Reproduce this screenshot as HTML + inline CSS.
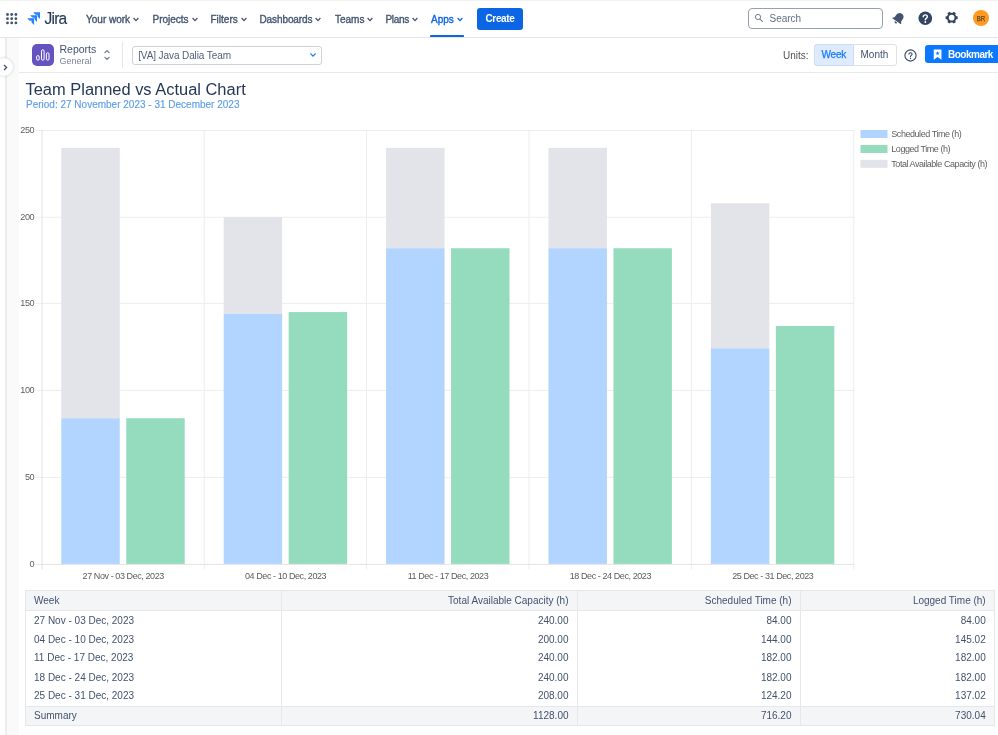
<!DOCTYPE html>
<html>
<head>
<meta charset="utf-8">
<title>Team Planned vs Actual Chart</title>
<style>
*{box-sizing:border-box;margin:0;padding:0}
html,body{width:998px;height:735px;overflow:hidden;background:#fff}
body{font-family:"Liberation Sans",sans-serif;color:#172b4d;position:relative}
.abs{position:absolute}
.t{position:absolute;white-space:nowrap;line-height:1}
/* top nav */
#nav{position:absolute;left:0;top:0;width:998px;height:38px;background:#fff;border-bottom:1px solid #e4e6ea;border-top:1px solid #f1f1f1}
.navi{position:absolute;top:14.5px;font-size:10px;color:#44546f;-webkit-text-stroke:0.35px #44546f;white-space:nowrap;line-height:10px}
.chev{position:absolute;top:16.5px;width:6px;height:5px}
/* second bar */
#bar2{position:absolute;left:19px;top:38px;width:979px;height:35px;background:#fff;border-bottom:1px solid #e6e8eb}
#side{position:absolute;left:5px;top:38px;width:14px;height:697px;background:#fafafa;border-left:2px solid #ebecf0}
/* table */
.hb{background:#f4f5f7;border-top:1px solid #e5e7eb;border-bottom:1px solid #e5e7eb}
.vl{top:590px;width:1px;height:136px;background:#e6e8ec}
.tr{position:absolute;left:0;width:998px;height:10px;font-size:10px;line-height:10px;color:#42526e}
.tr span{position:absolute;top:0;white-space:nowrap}
</style>
</head>
<body><div id="wrap" style="position:absolute;left:0;top:0;width:998px;height:735px;will-change:transform">
<div id="nav"></div>
<div id="side"></div>
<div id="bar2"></div>

<!-- app switcher -->
<svg class="abs" style="left:6.2px;top:12.6px;overflow:visible" width="12" height="12" viewBox="0 0 12 12" fill="#44546f"><circle cx="1.5" cy="1.5" r="1.4"/><circle cx="5.7" cy="1.5" r="1.4"/><circle cx="9.9" cy="1.5" r="1.4"/><circle cx="1.5" cy="5.7" r="1.4"/><circle cx="5.7" cy="5.7" r="1.4"/><circle cx="9.9" cy="5.7" r="1.4"/><circle cx="1.5" cy="9.9" r="1.4"/><circle cx="5.7" cy="9.9" r="1.4"/><circle cx="9.9" cy="9.9" r="1.4"/></svg>
<!-- jira logo -->
<svg class="abs" style="left:27.2px;top:12px" width="13.2" height="13.2" viewBox="-0.2 0 14.2 14.2">
<path d="M6.4 0.2 H13.8 V7.6 L11.1 4.9 V2.9 H9.1 Z" fill="#2684ff"/>
<path d="M3.2 3.4 H10.6 V10.8 L7.9 8.1 V6.1 H5.9 Z" fill="#2684ff"/>
<path d="M0 6.6 H7.4 V14 L4.7 11.3 V9.3 H2.7 Z" fill="#2684ff"/>
</svg>
<div class="t" style="left:44.5px;top:9.5px;font-size:15.5px;color:#253858;letter-spacing:-0.75px;line-height:18px;-webkit-text-stroke:0.15px #253858;transform:scaleY(1.1);transform-origin:0 84%">Jira</div>

<!-- nav items -->
<div class="navi" style="left:86px">Your work</div>
<div class="navi" style="left:152.5px">Projects</div>
<div class="navi" style="left:210.5px">Filters</div>
<div class="navi" style="left:259.5px;letter-spacing:-0.1px">Dashboards</div>
<div class="navi" style="left:335px">Teams</div>
<div class="navi" style="left:385.5px;letter-spacing:-0.3px">Plans</div>
<div class="navi" style="left:431px;color:#0c66e4;-webkit-text-stroke:0.35px #0c66e4">Apps</div>
<svg class="chev" style="left:133px" viewBox="0 0 6 5"><path d="M0.6 1 L3 3.6 L5.4 1" fill="none" stroke="#44546f" stroke-width="1.3"/></svg>
<svg class="chev" style="left:191.5px" viewBox="0 0 6 5"><path d="M0.6 1 L3 3.6 L5.4 1" fill="none" stroke="#44546f" stroke-width="1.3"/></svg>
<svg class="chev" style="left:240.5px" viewBox="0 0 6 5"><path d="M0.6 1 L3 3.6 L5.4 1" fill="none" stroke="#44546f" stroke-width="1.3"/></svg>
<svg class="chev" style="left:315px" viewBox="0 0 6 5"><path d="M0.6 1 L3 3.6 L5.4 1" fill="none" stroke="#44546f" stroke-width="1.3"/></svg>
<svg class="chev" style="left:366.5px" viewBox="0 0 6 5"><path d="M0.6 1 L3 3.6 L5.4 1" fill="none" stroke="#44546f" stroke-width="1.3"/></svg>
<svg class="chev" style="left:412px" viewBox="0 0 6 5"><path d="M0.6 1 L3 3.6 L5.4 1" fill="none" stroke="#44546f" stroke-width="1.3"/></svg>
<svg class="chev" style="left:456.5px" viewBox="0 0 6 5"><path d="M0.6 1 L3 3.6 L5.4 1" fill="none" stroke="#0c66e4" stroke-width="1.3"/></svg>
<div class="abs" style="left:430px;top:35.1px;width:34px;height:1.9px;background:#0c66e4;border-radius:1px 1px 0 0"></div>
<!-- create -->
<div class="abs" style="left:477px;top:8px;width:46px;height:21.5px;background:#0c66e4;border-radius:3px"></div>
<div class="t" style="left:485.5px;top:14px;font-size:10px;font-weight:700;color:#fff;letter-spacing:-0.35px">Create</div>

<!-- search -->
<div class="abs" style="left:748px;top:8px;width:135px;height:21px;border:1.5px solid #97a0af;border-radius:4px;background:#fff"></div>
<svg class="abs" style="left:754px;top:13px" width="10" height="10" viewBox="0 0 10 10"><circle cx="4" cy="4" r="2.6" fill="none" stroke="#6b778c" stroke-width="0.95"/><path d="M6 6 L8.4 8.4" stroke="#6b778c" stroke-width="1.05" stroke-linecap="round"/></svg>
<div class="t" style="left:769.5px;top:14px;font-size:10px;color:#626f86">Search</div>
<!-- notif -->
<svg class="abs" style="left:891px;top:11px" width="15" height="15" viewBox="0 0 15 15"><g transform="rotate(35 7.5 7.5)" fill="#44546f"><path d="M7.5 1.6 C4.9 1.6 3.6 3.5 3.6 5.8 V8.4 L2.3 10.2 V10.9 H12.7 V10.2 L11.4 8.4 V5.8 C11.4 3.5 10.1 1.6 7.5 1.6 Z"/><path d="M6 11.7 H9 A1.5 1.5 0 0 1 6 11.7 Z"/></g></svg>
<!-- help filled -->
<svg class="abs" style="left:917.8px;top:11.1px" width="14.6" height="14.6" viewBox="0 0 15 15"><circle cx="7.5" cy="7.5" r="7" fill="#344563"/><path d="M5.4 6 C5.4 3.3 9.6 3.3 9.6 6 C9.6 7.6 7.5 7.5 7.5 9.1" fill="none" stroke="#fff" stroke-width="1.5" stroke-linecap="round"/><circle cx="7.5" cy="11.3" r="0.95" fill="#fff"/></svg>
<!-- gear -->
<svg class="abs" style="left:945.3px;top:11.4px" width="13.3" height="13.3" viewBox="0 0 16 16"><g fill="#344563" transform="rotate(30 8 8)"><circle cx="8" cy="8" r="5.8"/><rect x="6.2" y="0.7" width="3.6" height="3.2" rx="0.8"/><rect transform="rotate(60 8 8)" x="6.2" y="0.7" width="3.6" height="3.2" rx="0.8"/><rect transform="rotate(120 8 8)" x="6.2" y="0.7" width="3.6" height="3.2" rx="0.8"/><rect transform="rotate(180 8 8)" x="6.2" y="0.7" width="3.6" height="3.2" rx="0.8"/><rect transform="rotate(240 8 8)" x="6.2" y="0.7" width="3.6" height="3.2" rx="0.8"/><rect transform="rotate(300 8 8)" x="6.2" y="0.7" width="3.6" height="3.2" rx="0.8"/></g><circle cx="8" cy="8" r="3.4" fill="#fff"/></svg>
<!-- avatar -->
<div class="abs" style="left:972.7px;top:10.2px;width:16px;height:16px;border-radius:50%;background:#ff991f"></div>
<div class="t" style="left:975.6px;top:14.6px;font-size:7.2px;font-weight:400;color:#5a4720;-webkit-text-stroke:0.25px #5a4720;transform:scaleX(.84);transform-origin:50% 50%">BR</div>

<!-- second bar content -->
<div class="abs" style="left:31.7px;top:44px;width:22px;height:22px;border-radius:5px;background:#6554c0"></div>
<svg class="abs" style="left:31.7px;top:44px" width="22" height="22" viewBox="0 0 22 22" fill="none" stroke="#fff" stroke-width="1.0"><rect x="4.6" y="11.6" width="2.6" height="4.6" rx="1.3"/><rect x="9.5" y="5.8" width="2.6" height="10.4" rx="1.3"/><rect x="14.4" y="8.8" width="2.6" height="7.4" rx="1.3"/></svg>
<div class="t" style="left:59.5px;top:44px;font-size:10.5px;color:#42526e">Reports</div>
<div class="t" style="left:59.5px;top:56.5px;font-size:9px;color:#7a869a">General</div>
<svg class="abs" style="left:103px;top:49px" width="8" height="12" viewBox="0 0 8 12" fill="none" stroke="#6b778c" stroke-width="1.25" stroke-linecap="round" stroke-linejoin="round"><path d="M1.9 3.6 L4 1.6 L6.1 3.6"/><path d="M1.9 8.4 L4 10.4 L6.1 8.4"/></svg>
<div class="abs" style="left:122px;top:42px;width:1px;height:26px;background:#e4e6ea"></div>
<div class="abs" style="left:132px;top:45.5px;width:189.6px;height:19.5px;border:1px solid #cdd1d9;border-radius:3px;background:#fff"></div>
<div class="t" style="left:138.2px;top:51px;font-size:10px;letter-spacing:-0.1px;color:#505f79">[VA] Java Dalia Team</div>
<svg class="abs" style="left:310.3px;top:53.2px" width="6" height="4.4" viewBox="0 0 7 5"><path d="M0.9 0.9 L3.5 3.6 L6.1 0.9" fill="none" stroke="#1d7afc" stroke-width="1.5" stroke-linecap="round"/></svg>

<div class="t" style="left:783px;top:50.5px;font-size:10px;color:#505255">Units:</div>
<div class="abs" style="left:814px;top:44px;width:82.5px;height:21.5px;border:1px solid #dfe1e6;border-radius:3px;background:#fff"></div>
<div class="abs" style="left:814px;top:44px;width:39.5px;height:21.5px;border:1px solid #cfdcf3;border-radius:3px 0 0 3px;background:#deebff"></div>
<div class="t" style="left:821.5px;top:50px;font-size:10px;letter-spacing:-0.2px;color:#1d7afc;-webkit-text-stroke:0.25px #1d7afc">Week</div>
<div class="t" style="left:860.5px;top:50px;font-size:10px;color:#42526e">Month</div>
<svg class="abs" style="left:904px;top:48.5px" width="13" height="13" viewBox="0 0 13 13"><circle cx="6.5" cy="6.5" r="5.6" fill="none" stroke="#344563" stroke-width="1.1"/><path d="M4.9 5.2 C4.9 3.2 8.1 3.2 8.1 5.2 C8.1 6.4 6.5 6.4 6.5 7.6" fill="none" stroke="#344563" stroke-width="1.1" stroke-linecap="round"/><circle cx="6.5" cy="9.4" r="0.7" fill="#344563"/></svg>
<div class="abs" style="left:925.4px;top:44.9px;width:80px;height:18.4px;background:#0c77ff;border-radius:3px"></div>
<svg class="abs" style="left:933.4px;top:49.3px" width="9.2" height="11.2" viewBox="0 0 9 11"><path d="M0.7 0.5 H8.3 V10.5 L4.5 7.9 L0.7 10.5 Z" fill="#fff"/><path d="M4.5 2.1 L5.1 3.5 L6.5 3.6 L5.4 4.5 L5.8 5.9 L4.5 5.1 L3.2 5.9 L3.6 4.5 L2.5 3.6 L3.9 3.5 Z" fill="#0c77ff"/></svg>
<div class="t" style="left:948px;top:50px;font-size:10px;font-weight:700;color:#fff;letter-spacing:-0.5px">Bookmark</div>

<!-- sidebar expand -->
<div class="abs" style="left:-4.6px;top:58.3px;width:18px;height:18px;border-radius:50%;background:#fff;box-shadow:0 0 3px rgba(9,30,66,.22)"></div>
<svg class="abs" style="left:3px;top:64px" width="5" height="7" viewBox="0 0 5 7"><path d="M1 1 L3.6 3.5 L1 6" fill="none" stroke="#44546f" stroke-width="1.3"/></svg>

<!-- titles -->
<div class="t" style="left:25.5px;top:80px;font-size:16.45px;color:#253858;line-height:18px">Team Planned vs Actual Chart</div>
<div class="t" style="left:26px;top:98.5px;font-size:10px;color:#5e9ee8;-webkit-text-stroke:0.15px #5e9ee8;line-height:11px">Period: 27 November 2023 - 31 December 2023</div>

<!-- chart -->
<svg class="abs" style="left:0;top:120px" width="998" height="470" viewBox="0 120 998 470" font-family="Liberation Sans, sans-serif">
<g stroke="#ededed" stroke-width="1">
<line x1="36" x2="854.3" y1="130.50" y2="130.50"/>
<line x1="36" x2="854.3" y1="217.20" y2="217.20"/>
<line x1="36" x2="854.3" y1="303.40" y2="303.40"/>
<line x1="36" x2="854.3" y1="390.40" y2="390.40"/>
<line x1="36" x2="854.3" y1="477.40" y2="477.40"/>
<line x1="204.20" x2="204.20" y1="130" y2="569.5"/>
<line x1="366.60" x2="366.60" y1="130" y2="569.5"/>
<line x1="529.00" x2="529.00" y1="130" y2="569.5"/>
<line x1="691.40" x2="691.40" y1="130" y2="569.5"/>
<line x1="853.80" x2="853.80" y1="130" y2="569.5"/>
</g>
<g stroke="#e3e3e3" stroke-width="1">
<line x1="42.05" x2="42.05" y1="130" y2="569.5"/>
<line x1="36" x2="854.3" y1="564.40" y2="564.40"/>
</g>
<g id="bars">
<rect x="61.29" y="147.84" width="58.46" height="270.40" fill="#e3e4e9"/>
<rect x="61.29" y="418.24" width="58.46" height="145.66" fill="#b1d5ff"/>
<rect x="126.25" y="418.24" width="58.46" height="145.66" fill="#95dcbe"/>
<rect x="223.69" y="217.20" width="58.46" height="96.64" fill="#e3e4e9"/>
<rect x="223.69" y="313.84" width="58.46" height="250.06" fill="#b1d5ff"/>
<rect x="288.65" y="312.07" width="58.46" height="251.83" fill="#95dcbe"/>
<rect x="386.09" y="147.84" width="58.46" height="100.39" fill="#e3e4e9"/>
<rect x="386.09" y="248.23" width="58.46" height="315.67" fill="#b1d5ff"/>
<rect x="451.05" y="248.23" width="58.46" height="315.67" fill="#95dcbe"/>
<rect x="548.49" y="147.84" width="58.46" height="100.39" fill="#e3e4e9"/>
<rect x="548.49" y="248.23" width="58.46" height="315.67" fill="#b1d5ff"/>
<rect x="613.45" y="248.23" width="58.46" height="315.67" fill="#95dcbe"/>
<rect x="710.89" y="203.33" width="58.46" height="144.96" fill="#e3e4e9"/>
<rect x="710.89" y="348.29" width="58.46" height="215.61" fill="#b1d5ff"/>
<rect x="775.85" y="325.99" width="58.46" height="237.91" fill="#95dcbe"/>
</g>
<g fill="#606060" font-size="9.1" letter-spacing="-0.38">
<text x="34.3" y="133.0" text-anchor="end">250</text>
<text x="34.3" y="219.7" text-anchor="end">200</text>
<text x="34.3" y="305.9" text-anchor="end">150</text>
<text x="34.3" y="392.9" text-anchor="end">100</text>
<text x="34.3" y="479.9" text-anchor="end">50</text>
<text x="34.3" y="566.9" text-anchor="end">0</text>
</g>
<g fill="#5c5c5c" font-size="9" letter-spacing="-0.42" text-anchor="middle">
<text x="123.2" y="579.3">27 Nov - 03 Dec, 2023</text>
<text x="285.6" y="579.3">04 Dec - 10 Dec, 2023</text>
<text x="448" y="579.3">11 Dec - 17 Dec, 2023</text>
<text x="610.4" y="579.3">18 Dec - 24 Dec, 2023</text>
<text x="772.8" y="579.3">25 Dec - 31 Dec, 2023</text>
</g>
<!-- legend -->
<rect x="860.5" y="130" width="27" height="8" fill="#b1d5ff"/>
<rect x="860.5" y="145" width="27" height="8" fill="#95dcbe"/>
<rect x="860.5" y="159.8" width="27" height="8" fill="#e3e4e9"/>
<g fill="#606060" font-size="9" letter-spacing="-0.45">
<text x="891.3" y="137.2">Scheduled Time (h)</text>
<text x="891.3" y="152">Logged Time (h)</text>
<text x="891.3" y="166.9">Total Available Capacity (h)</text>
</g>
</svg>

<!-- table -->
<div id="tbl">
<div class="abs hb" style="left:25px;top:590px;width:970px;height:21px"></div>
<div class="abs hb" style="left:25px;top:705.5px;width:970px;height:20.5px"></div>
<div class="abs vl" style="left:25px"></div>
<div class="abs vl" style="left:281px"></div>
<div class="abs vl" style="left:577px"></div>
<div class="abs vl" style="left:800px"></div>
<div class="abs vl" style="left:994px"></div>
<div class="tr" style="top:596px"><span style="left:34px">Week</span><span style="right:429.5px">Total Available Capacity (h)</span><span style="right:206.5px">Scheduled Time (h)</span><span style="right:12.3px">Logged Time (h)</span></div>
<div class="tr" style="top:616px"><span style="left:34px">27 Nov - 03 Dec, 2023</span><span style="right:429.5px">240.00</span><span style="right:206.5px">84.00</span><span style="right:12.3px">84.00</span></div>
<div class="tr" style="top:635px"><span style="left:34px">04 Dec - 10 Dec, 2023</span><span style="right:429.5px">200.00</span><span style="right:206.5px">144.00</span><span style="right:12.3px">145.02</span></div>
<div class="tr" style="top:653px"><span style="left:34px">11 Dec - 17 Dec, 2023</span><span style="right:429.5px">240.00</span><span style="right:206.5px">182.00</span><span style="right:12.3px">182.00</span></div>
<div class="tr" style="top:673px"><span style="left:34px">18 Dec - 24 Dec, 2023</span><span style="right:429.5px">240.00</span><span style="right:206.5px">182.00</span><span style="right:12.3px">182.00</span></div>
<div class="tr" style="top:691px"><span style="left:34px">25 Dec - 31 Dec, 2023</span><span style="right:429.5px">208.00</span><span style="right:206.5px">124.20</span><span style="right:12.3px">137.02</span></div>
<div class="tr" style="top:711px"><span style="left:34px">Summary</span><span style="right:429.5px">1128.00</span><span style="right:206.5px">716.20</span><span style="right:12.3px">730.04</span></div>
</div>
</div></body>
</html>
